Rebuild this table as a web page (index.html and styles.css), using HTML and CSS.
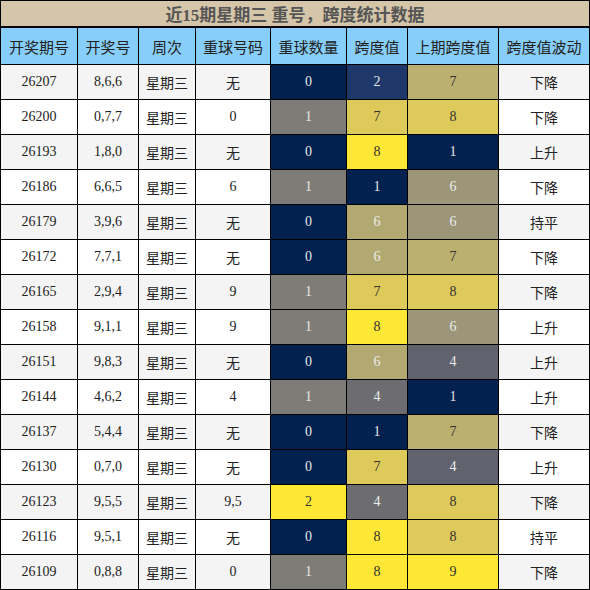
FILE: index.html
```html
<!DOCTYPE html>
<html lang="zh">
<head>
<meta charset="utf-8">
<title>近15期星期三 重号，跨度统计数据</title>
<link rel="stylesheet" href="styles.css">
</head>
<body>
<div class="sheet">
  <div class="title">近15期星期三 重号，跨度统计数据</div>
  <div class="grid">
    <div class="th">开奖期号</div><div class="th">开奖号</div><div class="th">周次</div><div class="th">重球号码</div><div class="th">重球数量</div><div class="th">跨度值</div><div class="th">上期跨度值</div><div class="th">跨度值波动</div>

    <div class="td alt num">26207</div><div class="td alt num">8,6,6</div><div class="td alt">星期三</div><div class="td alt">无</div><div class="td num navy">0</div><div class="td num navy2">2</div><div class="td num tan">7</div><div class="td alt">下降</div>
    <div class="td num">26200</div><div class="td num">0,7,7</div><div class="td">星期三</div><div class="td num">0</div><div class="td num gray">1</div><div class="td num gold">7</div><div class="td num gold">8</div><div class="td">下降</div>
    <div class="td alt num">26193</div><div class="td alt num">1,8,0</div><div class="td alt">星期三</div><div class="td alt">无</div><div class="td num navy">0</div><div class="td num yellow">8</div><div class="td num navy">1</div><div class="td alt">上升</div>
    <div class="td num">26186</div><div class="td num">6,6,5</div><div class="td">星期三</div><div class="td num">6</div><div class="td num gray">1</div><div class="td num navy">1</div><div class="td num khaki">6</div><div class="td">下降</div>
    <div class="td alt num">26179</div><div class="td alt num">3,9,6</div><div class="td alt">星期三</div><div class="td alt">无</div><div class="td num navy">0</div><div class="td num tan2">6</div><div class="td num khaki">6</div><div class="td alt">持平</div>
    <div class="td num">26172</div><div class="td num">7,7,1</div><div class="td">星期三</div><div class="td">无</div><div class="td num navy">0</div><div class="td num tan2">6</div><div class="td num tan">7</div><div class="td">下降</div>
    <div class="td alt num">26165</div><div class="td alt num">2,9,4</div><div class="td alt">星期三</div><div class="td alt num">9</div><div class="td num gray">1</div><div class="td num gold">7</div><div class="td num gold">8</div><div class="td alt">下降</div>
    <div class="td num">26158</div><div class="td num">9,1,1</div><div class="td">星期三</div><div class="td num">9</div><div class="td num gray">1</div><div class="td num yellow">8</div><div class="td num khaki">6</div><div class="td">上升</div>
    <div class="td alt num">26151</div><div class="td alt num">9,8,3</div><div class="td alt">星期三</div><div class="td alt">无</div><div class="td num navy">0</div><div class="td num tan2">6</div><div class="td num slate2">4</div><div class="td alt">上升</div>
    <div class="td num">26144</div><div class="td num">4,6,2</div><div class="td">星期三</div><div class="td num">4</div><div class="td num gray">1</div><div class="td num slate">4</div><div class="td num navy">1</div><div class="td">上升</div>
    <div class="td alt num">26137</div><div class="td alt num">5,4,4</div><div class="td alt">星期三</div><div class="td alt">无</div><div class="td num navy">0</div><div class="td num navy">1</div><div class="td num tan">7</div><div class="td alt">下降</div>
    <div class="td num">26130</div><div class="td num">0,7,0</div><div class="td">星期三</div><div class="td">无</div><div class="td num navy">0</div><div class="td num gold">7</div><div class="td num slate2">4</div><div class="td">上升</div>
    <div class="td alt num">26123</div><div class="td alt num">9,5,5</div><div class="td alt">星期三</div><div class="td alt num">9,5</div><div class="td num yellow">2</div><div class="td num slate">4</div><div class="td num gold">8</div><div class="td alt">下降</div>
    <div class="td num">26116</div><div class="td num">9,5,1</div><div class="td">星期三</div><div class="td">无</div><div class="td num navy">0</div><div class="td num yellow">8</div><div class="td num gold">8</div><div class="td">持平</div>
    <div class="td alt num">26109</div><div class="td alt num">0,8,8</div><div class="td alt">星期三</div><div class="td alt num">0</div><div class="td num gray">1</div><div class="td num yellow">8</div><div class="td num yellow">9</div><div class="td alt">下降</div>
  </div>
</div>
</body>
</html>
```

FILE: styles.css
```css
html, body {
  margin: 0;
  padding: 0;
  background: #ffffff;
}

.sheet {
  width: 590px;
  height: 590px;
  box-sizing: border-box;
  background: #000000;
  padding: 1px;
  display: flex;
  flex-direction: column;
  font-family: "Liberation Serif", "Noto Sans CJK SC", serif;
}

.title {
  height: 25px;
  margin-bottom: 2px;
  background: #d5c5a9;
  color: #555555;
  font-weight: bold;
  font-size: 17px;
  display: flex;
  align-items: center;
  justify-content: center;
  font-family: "Liberation Serif", "Noto Sans CJK SC", serif;
}

.grid {
  display: grid;
  grid-template-columns: 76px 60px 56px 74px 75px 60px 90px 90px;
  grid-template-rows: 36px repeat(15, 34px);
  gap: 1px;
}

.th {
  background: #87cefa;
  color: #222222;
  font-size: 15px;
  display: flex;
  align-items: center;
  justify-content: center;
  font-family: "Noto Sans CJK SC", sans-serif;
}

.td {
  background: #ffffff;
  color: #222222;
  font-size: 14px;
  display: flex;
  align-items: center;
  justify-content: center;
  font-family: "Noto Sans CJK SC", sans-serif;
}

.td.num {
  font-family: "Liberation Serif", serif;
  font-size: 14px;
}

.td.alt {
  background: #f4f4f4;
}

.navy   { background: #02214f; color: #e6e6e6; }
.navy2  { background: #1f386a; color: #e6e6e6; }
.tan    { background: #bcb070; color: #333333; }
.tan2   { background: #b2a872; color: #ececec; }
.gold   { background: #dec95b; color: #333333; }
.yellow { background: #fee835; color: #333333; }
.gray   { background: #7e7c77; color: #e6e6e6; }
.khaki  { background: #9c9578; color: #ececec; }
.slate  { background: #6d6d71; color: #ececec; }
.slate2 { background: #60636e; color: #ececec; }
```
